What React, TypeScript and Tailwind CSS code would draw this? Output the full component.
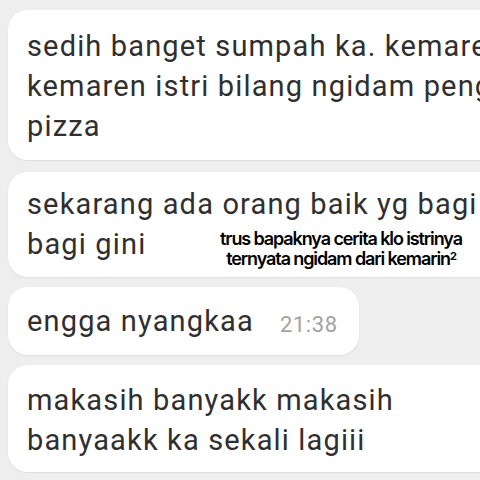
const font = { fontFamily: "Roboto, 'Noto Sans', sans-serif" };

function Bubble({
  lines,
  className = "",
  children,
}: {
  lines: string[];
  className?: string;
  children?: React.ReactNode;
}) {
  return (
    <div
      className={`relative bg-white rounded-l-[20px] pl-[19px] shadow-[0_1px_2px_rgba(0,0,0,0.07)] ${className}`}
    >
      {lines.map((l) => (
        <div
          key={l}
          className="whitespace-nowrap text-[29px] leading-[40px] tracking-[1.15px] text-[#2f2f2f]"
        >
          {l}
        </div>
      ))}
      {children}
    </div>
  );
}

export default function App() {
  return (
    <div
      className="w-[480px] h-[480px] overflow-hidden bg-[#eeeeee] pl-2 pt-[10px] flex flex-col"
      style={font}
    >
      <Bubble
        className="w-[560px] pt-[16px] pb-[14px]"
        lines={[
          "sedih banget sumpah ka. kemaren",
          "kemaren istri bilang ngidam pengen",
          "pizza",
        ]}
      />

      <Bubble
        className="w-[560px] mt-3 pt-[12px] pb-[13px]"
        lines={["sekarang ada orang baik yg bagi", "bagi gini"]}
      >
        {/* caption pasted over the screenshot */}
        <div
          className="absolute left-[203px] top-[57px] w-[260px] text-center text-[18px] leading-[20px] font-semibold tracking-[-1.1px] text-black"
          style={{ fontFamily: "Inter, 'Noto Sans', sans-serif" }}
        >
          trus bapaknya cerita klo istrinya
          <br />
          ternyata ngidam dari kemarin
          <sup className="text-[11px] font-bold">2</sup>
        </div>
      </Bubble>

      <div className="mt-[10px] self-start flex items-end bg-white rounded-[20px] pl-[19px] pr-[21px] pt-[14px] pb-[14px] shadow-[0_1px_2px_rgba(0,0,0,0.07)]">
        <span className="whitespace-nowrap text-[29px] leading-[40px] tracking-[1.15px] text-[#2f2f2f]">
          engga nyangkaa
        </span>
        <span className="ml-[26px] mb-[-1px] text-[22px] leading-[34px] tracking-[0.6px] text-[#a3a3a3]">
          21:38
        </span>
      </div>

      <Bubble
        className="w-[560px] mt-[10px] pt-[15px] pb-[12px]"
        lines={["makasih banyakk makasih", "banyaakk ka sekali lagiii"]}
      />
    </div>
  );
}
